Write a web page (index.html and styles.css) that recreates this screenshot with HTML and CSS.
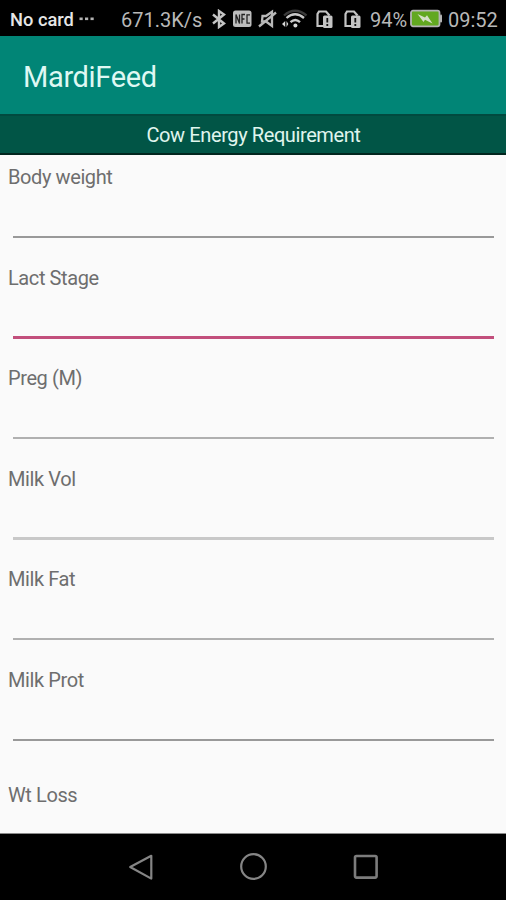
FILE: index.html
```html
<!DOCTYPE html>
<html lang="en">
<head>
    <meta charset="UTF-8">
    <meta name="viewport" content="width=device-width, initial-scale=1.0">
    <title>MardiFeed</title>
    <link rel="stylesheet" href="styles.css">
</head>
<body>

    <div class="screen">
        <!-- Status Bar -->
        <div class="status-bar">
            <span class="carrier">No card</span>
            <svg width="16" height="20" viewBox="0 0 16 20" fill="#b4b4b4">
                <rect x="0.5" y="8.5" width="3.2" height="2.6"/>
                <rect x="6" y="8.5" width="3.2" height="2.6"/>
                <rect x="11.5" y="8.5" width="3.2" height="2.6"/>
            </svg>
            <span class="speed">671.3K/s</span>
            <!-- Bluetooth -->
            <svg width="16" height="20" viewBox="0 0 16 20" fill="none" stroke="#c4c4c4" stroke-width="2.4">
                <path d="M2 5.5 L13 14.5 L8 18 V2 L13 5.5 L2 14.5"/>
            </svg>
            <!-- NFC -->
            <svg width="20" height="20" viewBox="0 0 20 20">
                <rect x="0" y="1.5" width="18.5" height="16.5" rx="2.5" fill="#bdbdbd"/>
                <path d="M3 14.5 V5.5 L6.5 14.5 V5.5 M9 14.5 V5.5 H12 M9 10 H11.5 M17 5.8 H14 V14.2 H17" fill="none" stroke="#222" stroke-width="1.3"/>
            </svg>
            <!-- Muted -->
            <svg width="20" height="20" viewBox="0 0 20 20" fill="none" stroke="#b8b8b8" stroke-width="2.3">
                <path d="M4.5 7 H8 L14 2.8 V17 L8 12.5 H4 Z"/>
                <path d="M1 17.5 L18 3.5"/>
            </svg>
            <!-- Wifi -->
            <svg width="28" height="20" viewBox="0 0 28 20" fill="none" stroke-width="2.3">
                <path d="M3 6.5 Q14 -3 25.5 6.5" stroke="#3a3a3a"/>
                <path d="M5.5 9 Q14 1.5 23 9" stroke="#c8c8c8"/>
                <path d="M9.5 13.2 Q14.3 8.8 19 13.2" stroke="#c8c8c8"/>
                <circle cx="14.4" cy="16.5" r="2" fill="#d8d8d8"/>
                <path d="M4.2 12 V18 L1 15 Z M5.5 12 V18 L7.3 15 Z" fill="#d8d8d8"/>
            </svg>
            <!-- SIM slots -->
            <svg width="20" height="20" viewBox="0 0 20 20">
                <path d="M8 17 H2.5 V5 L4 2.5 H11 L14.5 6.5" fill="none" stroke="#c4c4c4" stroke-width="2.2"/>
                <rect x="8" y="6.5" width="9.5" height="12.5" rx="1.5" fill="#c4c4c4"/>
                <path d="M12.3 9 V13.5 M12.3 15 V17" stroke="#111" stroke-width="1.8"/>
            </svg>
            <svg width="20" height="20" viewBox="0 0 20 20">
                <path d="M8 17 H2.5 V5 L4 2.5 H11 L14.5 6.5" fill="none" stroke="#c4c4c4" stroke-width="2.2"/>
                <rect x="8" y="6.5" width="9.5" height="12.5" rx="1.5" fill="#c4c4c4"/>
                <path d="M12.3 9 V13.5 M12.3 15 V17" stroke="#111" stroke-width="1.8"/>
            </svg>
            <span class="percent">94%</span>
            <!-- Battery -->
            <svg width="34" height="20" viewBox="0 0 34 20">
                <rect x="1" y="1.7" width="28.5" height="15.6" rx="2" fill="#62a820" stroke="#b4b4b4" stroke-width="1.8"/>
                <rect x="30" y="5.5" width="2" height="8" rx="1" fill="#b4b4b4"/>
                <path d="M7.5 5 L15 8.6 L17 6.2 L22.5 14.5 L15 10.8 L13.5 13 Z" fill="#d5dfc8"/>
            </svg>
            <span class="clock">09:52</span>
        </div>

        <!-- App Bar -->
        <div class="app-bar">
            <h1>MardiFeed</h1>
        </div>
        <h2 class="section-title">Cow Energy Requirement</h2>

        <!-- Input Form -->
        <form class="energy-form" id="energyForm">
            <div class="field">
                <label for="bodyWeight">Body weight</label>
                <input type="text" id="bodyWeight">
            </div>
            <div class="field active">
                <label for="lactStage">Lact Stage</label>
                <input type="text" id="lactStage">
            </div>
            <div class="field light">
                <label for="pregMonth">Preg (M)</label>
                <input type="text" id="pregMonth">
            </div>
            <div class="field lighter">
                <label for="milkVol">Milk Vol</label>
                <input type="text" id="milkVol">
            </div>
            <div class="field light">
                <label for="milkFat">Milk Fat</label>
                <input type="text" id="milkFat">
            </div>
            <div class="field">
                <label for="milkProt">Milk Prot</label>
                <input type="text" id="milkProt">
            </div>
            <div class="field last">
                <label>Wt Loss</label>
            </div>
        </form>

        <!-- Navigation Bar -->
        <div class="nav-bar">
            <svg width="28" height="28" viewBox="0 0 28 28" fill="none" stroke="#858585" stroke-width="2.2" stroke-linejoin="round">
                <path d="M24.3 2.8 V25.6 L3.2 14 Z"/>
            </svg>
            <svg width="28" height="28" viewBox="0 0 28 28" fill="none" stroke="#858585" stroke-width="2.2">
                <circle cx="14.5" cy="13.5" r="12.3"/>
            </svg>
            <svg width="28" height="28" viewBox="0 0 28 28" fill="none" stroke="#7c7c7c" stroke-width="2.6">
                <rect x="4" y="3" width="21.6" height="21.6" rx="1.5"/>
            </svg>
        </div>
    </div>

</body>
</html>
```
FILE: styles.css
```css
* {
    box-sizing: border-box;
}

body {
    margin: 0;
    padding: 0;
    font-family: Roboto, "Liberation Sans", sans-serif;
    background-color: #000;
}

.screen {
    display: flex;
    flex-direction: column;
    height: 900px;
    overflow: hidden;
}

.status-bar, .app-bar, .section-title, .nav-bar {
    flex-shrink: 0;
}

.status-bar {
    display: grid;
    grid-template-columns: 69px 42px 90px 22px 25px 23px 34px 28px 27px 40px 38px 1fr;
    align-items: center;
    height: 36px;
    padding-left: 10px;
    background-color: #000;
    color: #b8b8b8;
    font-size: 20px;
    line-height: 34px;
    white-space: nowrap;
}

.status-bar span {
    padding-top: 3px;
}

.status-bar svg {
    display: block;
}

.status-bar .carrier {
    color: #e6e6e6;
    font-size: 18.3px;
    font-weight: 500;
}

.app-bar {
    display: flex;
    align-items: center;
    height: 78px;
    padding: 3px 23px 0;
    background-color: #018576;
}

.app-bar h1 {
    margin: 0;
    color: #dff8f3;
    font-size: 29px;
    font-weight: 400;
    letter-spacing: -0.35px;
}

.section-title {
    height: 41px;
    margin: 0;
    border-top: 2px solid #014a3f;
    border-bottom: 2px solid #01261e;
    background-color: #015546;
    color: #e0f5ee;
    font-size: 20px;
    font-weight: 400;
    letter-spacing: -0.4px;
    line-height: 39px;
    text-align: center;
    text-indent: 1px;
}

.energy-form {
    flex: 1;
    min-height: 0;
    overflow: hidden;
    padding-top: 10px;
    border-bottom: 1px solid #8a8a8a;
    background-color: #fafafa;
}

.field {
    height: 100.6px;
}

.field label {
    display: block;
    padding-left: 8px;
    color: #6e6e6e;
    font-size: 20px;
    line-height: 24px;
    letter-spacing: -0.4px;
}

.field input {
    display: block;
    width: 481px;
    height: 49px;
    margin-left: 13px;
    padding: 0;
    border: none;
    border-bottom: 2px solid #999;
    border-radius: 0;
    outline: none;
    background: none;
    font: inherit;
}

.active input {
    border-bottom: 3px solid #c24f7c;
}

.light input {
    border-bottom-color: #b0b0b0;
}

.lighter input {
    border-bottom: 3px solid #c8c8c8;
}

.last {
    padding-top: 14px;
}

.nav-bar {
    display: flex;
    justify-content: center;
    align-items: center;
    gap: 84px;
    height: 66px;
    background-color: #000;
}
```
